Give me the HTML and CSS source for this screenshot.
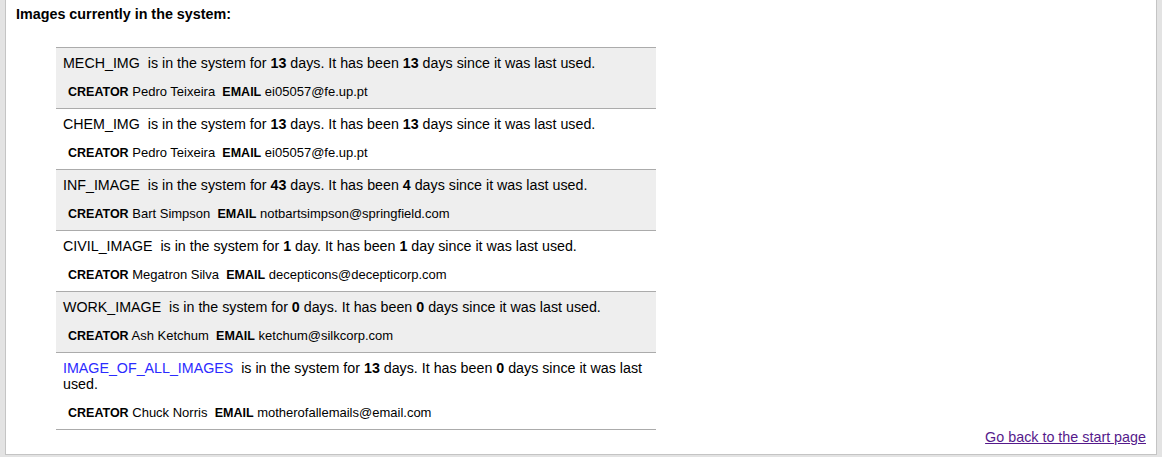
FILE: index.html
```html
<!DOCTYPE html>
<html>
<head>
<meta charset="utf-8">
<title>Images</title>
<link rel="stylesheet" href="styles.css">
</head>
<body>
<div class="page">
  <h3 class="heading">Images currently in the system:</h3>
  <ul class="image-list">
    <li class="item odd">
      <div class="title"><span class="name">MECH_IMG</span> &nbsp;is in the system for <b>13</b> days. It has been <b>13</b> days since it was last used.</div>
      <div class="meta"><b>CREATOR</b> Pedro Teixeira &nbsp;<b>EMAIL</b> ei05057@fe.up.pt</div>
    </li>
    <li class="item">
      <div class="title"><span class="name">CHEM_IMG</span> &nbsp;is in the system for <b>13</b> days. It has been <b>13</b> days since it was last used.</div>
      <div class="meta"><b>CREATOR</b> Pedro Teixeira &nbsp;<b>EMAIL</b> ei05057@fe.up.pt</div>
    </li>
    <li class="item odd">
      <div class="title"><span class="name">INF_IMAGE</span> &nbsp;is in the system for <b>43</b> days. It has been <b>4</b> days since it was last used.</div>
      <div class="meta"><b>CREATOR</b> Bart Simpson &nbsp;<b>EMAIL</b> notbartsimpson@springfield.com</div>
    </li>
    <li class="item">
      <div class="title"><span class="name">CIVIL_IMAGE</span> &nbsp;is in the system for <b>1</b> day. It has been <b>1</b> day since it was last used.</div>
      <div class="meta"><b>CREATOR</b> Megatron Silva &nbsp;<b>EMAIL</b> decepticons@decepticorp.com</div>
    </li>
    <li class="item odd">
      <div class="title"><span class="name">WORK_IMAGE</span> &nbsp;is in the system for <b>0</b> days. It has been <b>0</b> days since it was last used.</div>
      <div class="meta"><b>CREATOR</b> Ash Ketchum &nbsp;<b>EMAIL</b> ketchum@silkcorp.com</div>
    </li>
    <li class="item">
      <div class="title"><span class="name highlight">IMAGE_OF_ALL_IMAGES</span> &nbsp;is in the system for <b>13</b> days. It has been <b>0</b> days since it was last used.</div>
      <div class="meta"><b>CREATOR</b> Chuck Norris &nbsp;<b>EMAIL</b> motherofallemails@email.com</div>
    </li>
  </ul>
  <div class="footer"><a class="back" href="#">Go back to the start page</a></div>
</div>
</body>
</html>
```

FILE: styles.css
```css
html, body {
  margin: 0;
  padding: 0;
}
body {
  background: #e3e3e3;
  font-family: "Liberation Sans", Arial, sans-serif;
  color: #000;
  padding: 0 5px;
  height: 457px;
  box-sizing: border-box;
}
.page {
  background: #fff;
  border: 1px solid #c4c4c4;
  border-top: none;
  height: 455px;
  box-sizing: border-box;
  padding: 6px 10px 10px;
}
.heading {
  margin: 0 0 25px;
  font-size: 14.33px;
  line-height: 16px;
  font-weight: bold;
}
.image-list {
  list-style: none;
  margin: 0;
  padding: 0 0 0 40px;
}
.item {
  width: 600px;
  box-sizing: border-box;
  padding: 7px 7px 8px;
  border-bottom: 1px solid #ababab;
}
.item:first-child {
  border-top: 1px solid #ababab;
}
.item.odd {
  background: #eeeeee;
}
.title {
  font-size: 14.25px;
  line-height: 16px;
}
.highlight {
  color: #2b2bff;
}
.meta {
  margin-top: 13px;
  padding-left: 5px;
  font-size: 13px;
  line-height: 16px;
}
.meta b {
  font-size: 12.5px;
}
.footer {
  text-align: right;
  font-size: 14.33px;
  line-height: 12px;
  padding-top: 1px;
}
.back {
  color: #551a8b;
  text-decoration: underline;
}
```
